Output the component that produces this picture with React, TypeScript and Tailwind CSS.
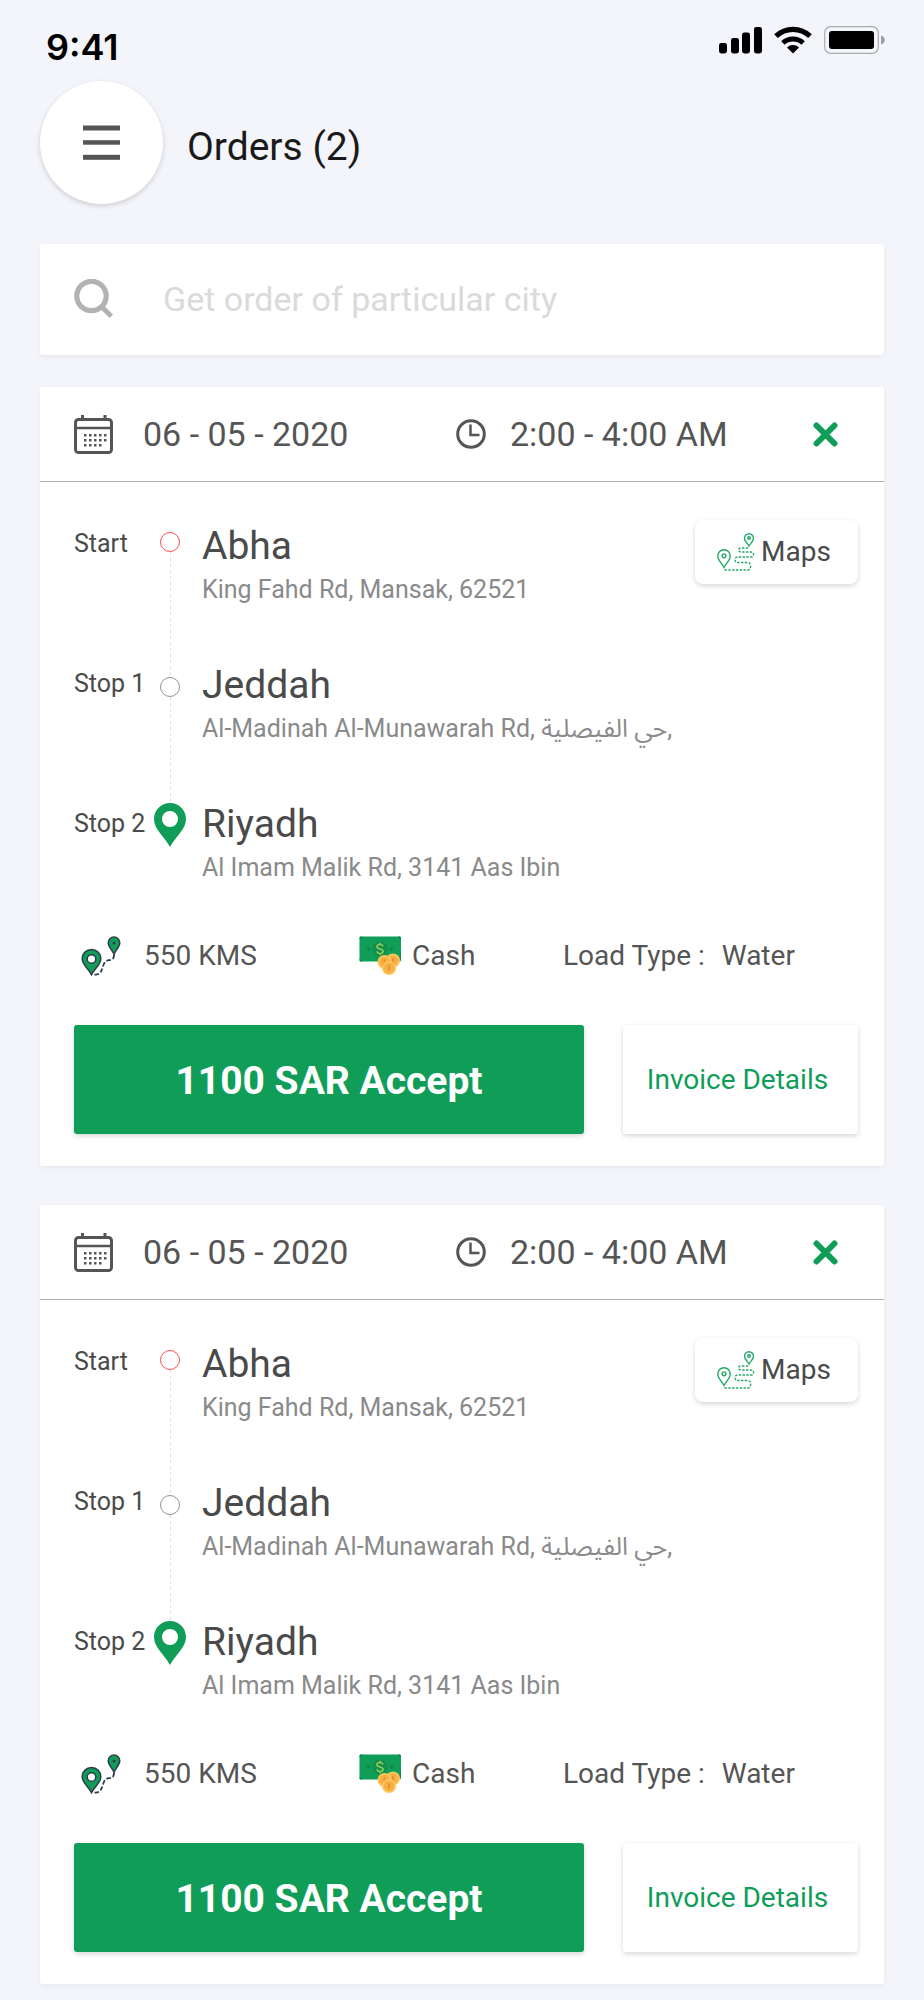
import React from "react";

type Order = {
  id: string;
  date: string;
  time: string;
  stops: { label: string; city: string; address: string }[];
  distance: string;
  payment: string;
  load: string;
  price: string;
};

const baseOrder: Omit<Order, "id"> = {
  date: "06 - 05 - 2020",
  time: "2:00 - 4:00 AM",
  stops: [
    { label: "Start", city: "Abha", address: "King Fahd Rd, Mansak, 62521" },
    { label: "Stop 1", city: "Jeddah", address: "Al-Madinah Al-Munawarah Rd, حي الفيصلية," },
    { label: "Stop 2", city: "Riyadh", address: "Al Imam Malik Rd, 3141 Aas Ibin" },
  ],
  distance: "550 KMS",
  payment: "Cash",
  load: "Water",
  price: "1100 SAR",
};

const orders: Order[] = [
  { id: "order-1", ...baseOrder },
  { id: "order-2", ...baseOrder },
];

function SignalIcon() {
  return (
    <svg width="43" height="28" viewBox="0 0 43 28" aria-hidden="true">
      <rect x="0" y="17" width="8" height="10.5" rx="2.4" />
      <rect x="12" y="12" width="8" height="15.5" rx="2.4" />
      <rect x="23" y="6.5" width="8" height="21" rx="2.4" />
      <rect x="35" y="1" width="8" height="26.5" rx="2.4" />
    </svg>
  );
}

function WifiIcon() {
  return (
    <svg width="38" height="28" viewBox="0 0 38 28" fill="none" stroke="#000" aria-hidden="true">
      <path d="M2 10.2A24.5 24.5 0 0 1 36 10.2" strokeWidth="5.2" />
      <path d="M8.9 17A14.8 14.8 0 0 1 29.1 17" strokeWidth="5" />
      <path d="M13 21.5A8.6 8.6 0 0 1 25 21.5L19 27.5Z" fill="#000" stroke="none" />
    </svg>
  );
}

function BatteryIcon() {
  return (
    <svg width="61" height="28" viewBox="0 0 61 28" aria-hidden="true">
      <rect x="0.7" y="0.7" width="53.6" height="26.6" rx="6" fill="none" stroke="#a9aaad" strokeWidth="1.2" />
      <rect x="5" y="5" width="45" height="18" rx="3" />
      <path d="M57 9.5c2.4.8 3.8 2.500 3.800 4.500s-1.400 3.700-3.800 4.500z" fill="#9c9da0" />
    </svg>
  );
}

function SearchIcon() {
  return (
    <svg width="39" height="39" viewBox="0 0 39 39" fill="none" stroke="#b2b2b2" aria-hidden="true">
      <circle cx="17.500" cy="17" r="14.700" strokeWidth="5.200" />
      <path d="M27.500 27.500L37.300 37.300" strokeWidth="4.800" />
    </svg>
  );
}

function CalendarIcon() {
  const dots = [
    [20, 5],
    [25, 5],
    [30, 4],
  ];
  return (
    <svg width="39" height="39" viewBox="0 0 39 39" aria-hidden="true">
      <rect x="1.500" y="4.500" width="36" height="33" rx="3" fill="none" stroke="#555" strokeWidth="3" />
      <path d="M1.300 13H37.700" stroke="#555" strokeWidth="2.600" />
      <path d="M8.500 0V4M31 0V4" stroke="#555" strokeWidth="3" />
      {dots.map(([y, count]) =>
        Array.from({ length: count }, (_, i) => (
          <rect key={`${y}-${i}`} x={10 + i * 5} y={y - 1} width="2.500" height="2.500" fill="#555" />
        )),
      )}
    </svg>
  );
}

function ClockIcon() {
  return (
    <svg width="30" height="30" viewBox="0 0 30 30" fill="none" stroke="#555" strokeWidth="3" aria-hidden="true">
      <circle cx="15" cy="15" r="13.300" />
      <path d="M14.500 5.500V16H23.500" strokeWidth="2.500" />
    </svg>
  );
}

function CloseIcon() {
  return (
    <svg width="25" height="25" viewBox="0 0 25 25" stroke="#0f9d58" strokeWidth="6" strokeLinecap="round" aria-hidden="true">
      <path d="M3.500 3.500L21.500 21.500M21.500 3.500L3.500 21.500" />
    </svg>
  );
}

function RouteIcon() {
  return (
    <svg width="38" height="38" viewBox="0 0 38 38" fill="none" stroke="#22a866" strokeWidth="1.400" aria-hidden="true">
      <path d="M7 34.500C4.800 30 .8 27.500.8 23a6.200 6.200 0 0 1 12.400 0c0 4.500-4 7-6.200 11.500z" />
      <circle cx="7" cy="22.800" r="1.900" />
      <path d="M32 13C30.400 10 27.500 8.500 27.500 5.200a4.500 4.500 0 0 1 9 0C36.500 8.500 33.600 10 32 13z" />
      <circle cx="32" cy="5" r="1.300" />
      <path
        d="M7.500 37H31c3.500 0 3.500-7.500 0-7.500H20.500c-3.300 0-3.300-5.500 0-5.500H34c3.500 0 3.500-5 0-5H24c-3.200 0-3.200-4 0-4h8"
        strokeDasharray="2.400 1.400"
      />
    </svg>
  );
}

function PinIcon() {
  return (
    <svg width="32" height="44" viewBox="0 0 32 44" aria-hidden="true">
      <path
        fillRule="evenodd"
        fill="#0f9d58"
        d="M16 0C7 0 0 7 0 16c0 10.500 10 17 16 28 6-11 16-17.500 16-28C32 7 25 0 16 0zm0 8a8 8 0 1 1 0 16 8 8 0 0 1 0-16z"
      />
    </svg>
  );
}

function DistanceIcon() {
  return (
    <svg width="40" height="40" viewBox="0 0 40 40" stroke="#2f3e4b" strokeWidth="1.500" aria-hidden="true">
      <path d="M10.500 38.700C8 33 1.200 29 1.200 22.700a9.300 9.300 0 0 1 18.600 0C19.800 29 13 33 10.500 38.700z" fill="#0f9d58" />
      <circle cx="10.500" cy="23" r="4.300" fill="#fff" />
      <path d="M33 18.500C31.500 14 27.200 11 27.200 6.800a5.800 5.800 0 0 1 11.600 0C38.800 11 34.500 14 33 18.500z" fill="#0f9d58" />
      <circle cx="33" cy="7" r="1.500" fill="#2f3e4b" stroke="none" />
      <path
        d="M13.500 38.500c7 .5 7-4.500 9-9.500 2-6 6-4 8.500-5.500 2-1.200 2-2.800 2-5"
        fill="none"
        strokeDasharray="4.500 2"
        strokeWidth="1.800"
      />
    </svg>
  );
}

function Coin({ x, y }: { x: number; y: number }) {
  return (
    <g>
      <circle cx={x} cy={y} r="7" fill="#ffc45a" />
      <circle cx={x} cy={y} r="5.200" fill="#f7b046" />
      <path d={`M${x} ${y - 2.600}V${y + 2.600}`} stroke="#e8912a" strokeWidth="1.800" />
    </g>
  );
}

function CashIcon() {
  return (
    <svg width="43" height="40" viewBox="0 0 43 40" aria-hidden="true">
      <rect x="0.500" y="0.500" width="41.500" height="25" rx="1.500" fill="#0f9d58" />
      <path d="M0.500 3a3 3 0 0 0 3-2.500H2Q.5.5.5 2zM42 3a3 3 0 0 1-3-2.500h1.500Q42 .5 42 2zM.5 23a3 3 0 0 1 3 2.500H2Q.5 25.500.5 24zM42 23v-4l-3 4z" fill="#0a8a49" />
      <circle cx="21" cy="13" r="7.500" fill="#129049" />
      <circle cx="9.500" cy="13" r="1.700" fill="#0a8a49" />
      <circle cx="32.500" cy="13" r="1.700" fill="#0a8a49" />
      <path
        d="M24 10.400c-.5-1.300-1.600-1.900-3-1.900-1.700 0-3 .8-3 2.200 0 3.200 6.100 1.300 6.100 4.500 0 1.500-1.400 2.300-3.100 2.300-1.600 0-2.800-.7-3.200-2.100M21 6.700v1.800M21 17.500v1.800"
        fill="none"
        stroke="#91cc5c"
        strokeWidth="1.600"
      />
      <Coin x={34} y={24.500} />
      <Coin x={25.500} y={26} />
      <Coin x={30} y={32} />
    </svg>
  );
}

function StatusBar() {
  return (
    <div className="flex items-start justify-between pt-[26px] pr-[39px] pl-[46px]">
      <span className="font-['Inter',sans-serif] text-[36px] leading-[42px] font-semibold text-black">9:41</span>
      <div className="flex gap-3">
        <SignalIcon />
        <WifiIcon />
        <BatteryIcon />
      </div>
    </div>
  );
}

function Timeline() {
  return (
    <div className="flex w-8 flex-col items-center pt-2.5" aria-hidden="true">
      <span className="size-5 rounded-full border border-[#ff4d4f]" />
      <span className="h-[125px] w-px bg-[repeating-linear-gradient(#dedede_0_3px,transparent_3px_6px)]" />
      <span className="size-5 rounded-full border border-[#929292]" />
      <span className="h-[106px] w-px bg-[repeating-linear-gradient(#dedede_0_3px,transparent_3px_6px)]" />
      <PinIcon />
    </div>
  );
}

function OrderCard({ order }: { order: Order }) {
  return (
    <article className="rounded-[3px] bg-white shadow-[0_2px_5px_rgba(0,0,0,0.05)]">
      <header className="grid h-[95px] grid-cols-[382fr_357fr_auto] items-center border-b border-[#b0b0b0] pr-[46px] pl-[34px] text-[34px] leading-10 text-[#555]">
        <div className="flex items-center gap-[30px]">
          <CalendarIcon />
          <span>{order.date}</span>
        </div>
        <div className="flex items-center gap-6">
          <ClockIcon />
          <span>{order.time}</span>
        </div>
        <button type="button" aria-label="Dismiss order">
          <CloseIcon />
        </button>
      </header>

      <div className="pt-[38px] pr-[26px] pb-8 pl-[34px]">
        <div className="flex items-start">
          <div className="flex flex-1 pt-0.5">
            <div className="flex w-20 flex-col gap-[100px] pt-0.5 text-[25px] leading-10 whitespace-nowrap text-[#4a4a4a]">
              {order.stops.map((stop) => (
                <span key={stop.label}>{stop.label}</span>
              ))}
            </div>
            <Timeline />
            <div className="flex flex-1 flex-col gap-[51px] pl-4">
              {order.stops.map((stop) => (
                <div key={stop.label}>
                  <h2 className="text-[39px] leading-[48px] text-[#4a4a4a]">{stop.city}</h2>
                  <p className="text-[25px] leading-10 whitespace-nowrap text-[#8a8a8a]">{stop.address}</p>
                </div>
              ))}
            </div>
          </div>
          <button
            type="button"
            className="flex h-16 w-[163px] items-center gap-1.5 rounded-lg bg-white pl-[22px] text-[28px] leading-10 text-[#4a4a4a] shadow-[0_2px_5px_rgba(0,0,0,0.16)]"
          >
            <RouteIcon />
            Maps
          </button>
        </div>

        <div className="mt-12 grid h-10 grid-cols-[285fr_204fr_295fr] items-center text-[28px] leading-10 whitespace-nowrap text-[#555]">
          <div className="flex items-center gap-[23px] pl-[7px]">
            <DistanceIcon />
            <span>{order.distance}</span>
          </div>
          <div className="flex items-center gap-2.5">
            <CashIcon />
            <span>{order.payment}</span>
          </div>
          <div className="flex gap-[17px]">
            <span>Load Type :</span>
            <span>{order.load}</span>
          </div>
        </div>

        <div className="mt-[49px] flex h-[109px] gap-[39px]">
          <button
            type="button"
            className="flex-1 rounded-[3px] bg-[#0f9d58] pt-0.5 text-[39px] leading-[48px] font-bold text-white shadow-[0_2px_5px_rgba(0,0,0,0.16)]"
          >
            {order.price} Accept
          </button>
          <button
            type="button"
            className="w-[235px] rounded-[3px] bg-white pr-1.5 text-[28px] leading-10 text-[#0f9d58] shadow-[0_2px_5px_rgba(0,0,0,0.16)]"
          >
            Invoice Details
          </button>
        </div>
      </div>
    </article>
  );
}

export default function App() {
  return (
    <div className="min-h-screen bg-[#f4f5fa] pb-4 font-['Roboto','Noto_Sans_Arabic','DejaVu_Sans',sans-serif]">
      <StatusBar />
      <header className="mt-[13px] flex items-center gap-6 px-10">
        <button
          type="button"
          aria-label="Open menu"
          className="flex size-[123px] items-center justify-center rounded-full bg-white shadow-[0_2px_5px_rgba(0,0,0,0.16)]"
        >
          <svg width="37" height="35" viewBox="0 0 37 35" fill="#555" aria-hidden="true">
            <rect width="37" height="5" y="0.500" />
            <rect width="37" height="4.500" y="15.200" />
            <rect width="37" height="5" y="29.800" />
          </svg>
        </button>
        <h1 className="pt-2 text-[39px] leading-[48px] text-[#1a1a1a]">Orders ({orders.length})</h1>
      </header>

      <main className="px-10 pt-10">
        <label className="flex h-[111px] items-center gap-[50px] rounded-[3px] bg-white pr-8 pb-0.5 pl-[34px] shadow-[0_2px_5px_rgba(0,0,0,0.05)]">
          <SearchIcon />
          <input
            type="search"
            aria-label="Search orders by city"
            placeholder="Get order of particular city"
            className="h-12 min-w-0 flex-1 bg-transparent text-[34px] leading-10 text-[#555] outline-none placeholder:text-[#dadada]"
          />
        </label>
        <div className="mt-8 flex flex-col gap-[39px]">
          {orders.map((order) => (
            <OrderCard key={order.id} order={order} />
          ))}
        </div>
      </main>
    </div>
  );
}
